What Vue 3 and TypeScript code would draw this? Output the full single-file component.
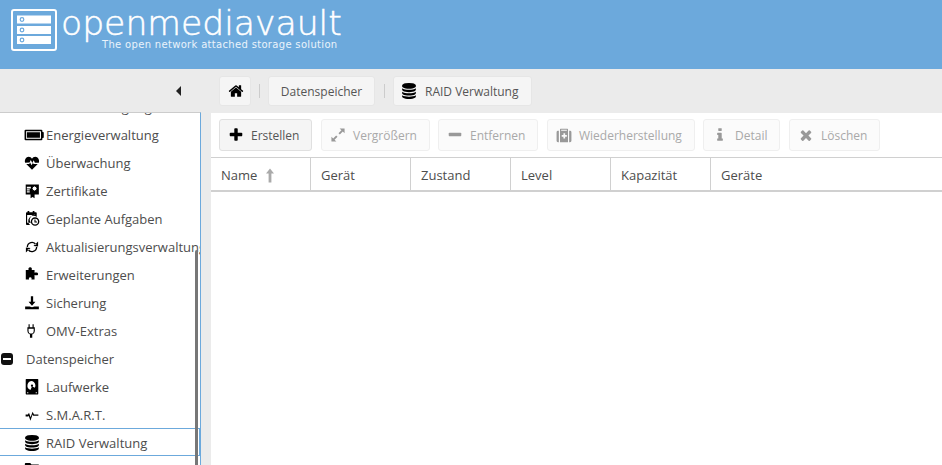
<script setup lang="ts">
const D: Record<string, string> = {
  plus: 'M1600 736v192q0 40-28 68t-68 28h-416v416q0 40-28 68t-68 28h-192q-40 0-68-28t-28-68v-416h-416q-40 0-68-28t-28-68v-192q0-40 28-68t68-28h416v-416q0-40 28-68t68-28h192q40 0 68 28t28 68v416h416q40 0 68 28t28 68z',
  minus: 'M1600 736v192q0 40-28 68t-68 28h-1216q-40 0-68-28t-28-68v-192q0-40 28-68t68-28h1216q40 0 68 28t28 68z',
  times: 'M1490 1322q0 40-28 68l-136 136q-28 28-68 28t-68-28l-294-294-294 294q-28 28-68 28t-68-28l-136-136q-28-28-28-68t28-68l294-294-294-294q-28-28-28-68t28-68l136-136q28-28 68-28t68 28l294 294 294-294q28-28 68-28t68 28l136 136q28 28 28 68t-28 68l-294 294 294 294q28 28 28 68z',
  home: 'M1472 992v480q0 26-19 45t-45 19h-384v-384h-256v384h-384q-26 0-45-19t-19-45v-480q0-1 .5-3t.5-3l575-474 575 474q1 2 1 6zm223-69l-62 74q-8 9-21 11h-3q-13 0-21-7l-692-577-692 577q-12 8-24 7-13-2-21-11l-62-74q-8-10-7-23.5t11-21.5l719-599q32-26 76-26t76 26l244 204v-195q0-14 9-23t23-9h192q14 0 23 9t9 23v408l219 182q10 8 11 21.5t-7 23.5z',
  database: 'M896 768q237 0 443-43t325-127v170q0 69-103 128t-280 93.5-385 34.5-385-34.5-280-93.5-103-128v-170q119 84 325 127t443 43zm0 768q237 0 443-43t325-127v170q0 69-103 128t-280 93.5-385 34.5-385-34.5-280-93.5-103-128v-170q119 84 325 127t443 43zm0-384q237 0 443-43t325-127v170q0 69-103 128t-280 93.5-385 34.5-385-34.5-280-93.5-103-128v-170q119 84 325 127t443 43zm0-1152q208 0 385 34.5t280 93.5 103 128v128q0 69-103 128t-280 93.5-385 34.5-385-34.5-280-93.5-103-128v-128q0-69 103-128t280-93.5 385-34.5z',
  info: 'M1216 1344v128q0 26-19 45t-45 19h-512q-26 0-45-19t-19-45v-128q0-26 19-45t45-19h64v-384h-64q-26 0-45-19t-19-45v-128q0-26 19-45t45-19h384q26 0 45 19t19 45v576h64q26 0 45 19t19 45zm-128-1152v192q0 26-19 45t-45 19h-256q-26 0-45-19t-19-45v-192q0-26 19-45t45-19h256q26 0 45 19t19 45z',
  refresh: 'M300 896A596 596 0 0 1 1400 596L1270 670A446 446 0 0 0 450 896ZM1580 280V840L1060 780ZM1492 896A596 596 0 0 1 392 1196L522 1122A446 446 0 0 0 1342 896ZM212 1512V952L732 1012Z',
  battery: 'M150 420h1400a100 100 0 0 1 100 100v110h60a60 60 0 0 1 60 60v412a60 60 0 0 1-60 60h-60v110a100 100 0 0 1-100 100H150a100 100 0 0 1-100-100V520a100 100 0 0 1 100-100zm30 130v692h1340V550zm70 90h1180v512H250z',
  heart: 'M896 1640 250 1010h340l90-170 170 320 150-290 70 140h470zM130 880C20 540 220 190 530 190c160 0 290 90 366 220 76-130 206-220 366-220 310 0 510 350 400 690h-440l-140-280-150 290-170-320-140 280z',
  cert: 'M192 160h1472v1120h-480v416l-224-128-224 128v-416H192zM320 416h448v192H320zm0 288h320v128H320zm0 224h320v128H320zm860-600-70 110-128-30 30 128-110 70 110 70-30 128 128-30 70 110 70-110 128 30-30-128 110-70-110-70 30-128-128 30z',
  calendar: 'M400 0h192v128h384V0h192v128h160a96 96 0 0 1 96 96v440a540 540 0 0 0-740 900H320a96 96 0 0 1-96-96V224a96 96 0 0 1 96-96h80zM352 448v870h420a540 540 0 0 1 530-870zM1240 704a480 480 0 1 1 0 960 480 480 0 0 1 0-960zm0 150a330 330 0 1 0 0 660 330 330 0 0 0 0-660zm-70 90h120v230h170v120h-290z',
  puzzle: 'M200 340h320c-60-120-20-300 170-300s230 180 170 300h320v300c120-60 400-60 400 130s-280 190-400 130v500H830c40-80 40-240-130-240s-170 160-130 240H200z',
  download: 'M768 128h256v640h256L896 1216 512 768h256zM128 1280h500l268 100 268-100h500v320H128z',
  plug: 'M508 128h128v352h320V128h128v352h128v416a416 416 0 0 1-288 396v372H668v-372a416 416 0 0 1-288-396V480h128zM508 640v256a288 288 0 0 0 576 0V640z',
  hdd: 'M256 0h1280a64 64 0 0 1 64 64v1600a64 64 0 0 1-64 64H256a64 64 0 0 1-64-64V64a64 64 0 0 1 64-64zm640 224a520 520 0 0 0-180 1005l150-300-50-30 70-80 320 170a520 520 0 0 0-310-765zm0 392a128 128 0 1 1 0 256 128 128 0 0 1 0-256zM480 1472h-128v128h128zm960 0h-128v128h128z',
  activity: 'M180 840h260l120-200 180 520 220-640 160 320h490v140H1030l-70-140-240 690-190-550-50 80H180z',
  expand: 'M1080 160h552v552l-200-200-330 330-152-152 330-330zM160 1632v-552l200 200 330-330 152 152-330 330 200 200z',
  medkit: 'M1280 416h288a160 160 0 0 1 160 160v960a160 160 0 0 1-160 160h-96V416zM320 1696h-96a160 160 0 0 1-160-160V576a160 160 0 0 1 160-160h96zm128-1280V256q0-64 64-64h768q64 0 64 64v160h-128V320H576v96h768v1280H448zm384 288v192H640v192h192v192h192v-192h192V896h-192V704z',
  folder: 'M192 0h512l128 160h768a96 96 0 0 1 96 96v800a96 96 0 0 1-96 96H192a96 96 0 0 1-96-96V96a96 96 0 0 1 96-96z',
}

const rows = [
  { icon: 'battery', label: 'Energieverwaltung', wide: true },
  { icon: 'heart', label: 'Überwachung', wide: false },
  { icon: 'cert', label: 'Zertifikate', wide: false },
  { icon: 'calendar', label: 'Geplante Aufgaben', wide: false },
  { icon: 'refresh', label: 'Aktualisierungsverwaltung', wide: false },
  { icon: 'puzzle', label: 'Erweiterungen', wide: false },
  { icon: 'download', label: 'Sicherung', wide: false },
  { icon: 'plug', label: 'OMV-Extras', wide: false },
]
const storage = [
  { icon: 'hdd', label: 'Laufwerke', selected: false },
  { icon: 'activity', label: 'S.M.A.R.T.', selected: false },
  { icon: 'database', label: 'RAID Verwaltung', selected: true },
  { icon: 'folder', label: 'Dateisysteme', selected: false },
]
const buttons = [
  { icon: 'plus', label: 'Erstellen', w: 93, on: true },
  { icon: 'expand', label: 'Vergrößern', w: 109, on: false },
  { icon: 'minus', label: 'Entfernen', w: 100, on: false },
  { icon: 'medkit', label: 'Wiederherstellung', w: 148, on: false },
  { icon: 'info', label: 'Detail', w: 77, on: false },
  { icon: 'times', label: 'Löschen', w: 91, on: false },
]
const columns = ['Name', 'Gerät', 'Zustand', 'Level', 'Kapazität', 'Geräte']
</script>

<template>
  <div class="page">
    <header class="banner">
      <svg class="logo-mark" width="46" height="42" viewBox="0 0 46 42">
        <rect x="1" y="1" width="44" height="40" rx="2" fill="none" stroke="#fff" stroke-width="2" />
        <g v-for="y in [6.5, 17, 27]" :key="y">
          <rect x="6" :y="y" width="34" height="8" fill="#fff" />
          <circle cx="11" :cy="y + 4" r="1.8" fill="none" stroke="#6ca9dc" stroke-width="1.2" />
        </g>
      </svg>
      <div class="brand">
        <div class="brand-name">openmediavault</div>
        <div class="brand-tag">The open network attached storage solution</div>
      </div>
    </header>

    <div class="crumb-row">
      <div class="collapse"><span class="caret"></span></div>
      <div class="crumbs">
        <div class="crumb crumb-home">
          <svg width="16" height="16" viewBox="0 0 1792 1792"><path :d="D.home" /></svg>
        </div>
        <span class="sep"></span>
        <div class="crumb crumb-storage">Datenspeicher</div>
        <span class="sep"></span>
        <div class="crumb crumb-raid">
          <svg width="16" height="16" viewBox="0 0 1792 1792"><path :d="D.database" /></svg>
          <span>RAID Verwaltung</span>
        </div>
      </div>
    </div>

    <div class="main">
      <aside class="side">
        <div class="tree">
          <div class="row child">
            <span class="ic"></span><span class="lbl">Benachrichtigung</span>
          </div>
          <div v-for="r in rows" :key="r.label" class="row child">
            <span class="ic">
              <svg :width="r.wide ? 20 : 16" :height="r.wide ? 20 : 16" viewBox="0 0 1792 1792" class="ic-svg"><path :d="D[r.icon]" fill-rule="evenodd" /></svg>
            </span>
            <span class="lbl">{{ r.label }}</span>
          </div>
          <div class="row group">
            <span class="toggle"><span class="toggle-bar"></span></span>
            <span class="lbl">Datenspeicher</span>
          </div>
          <div v-for="r in storage" :key="r.label" class="row child" :class="{ selected: r.selected }">
            <span class="ic">
              <svg width="16" height="16" viewBox="0 0 1792 1792" class="ic-svg"><path :d="D[r.icon]" fill-rule="evenodd" /></svg>
            </span>
            <span class="lbl">{{ r.label }}</span>
          </div>
        </div>
        <div class="scrollbar"></div>
      </aside>

      <section class="panel">
        <div class="toolbar">
          <div v-for="b in buttons" :key="b.label" class="tbtn" :class="{ off: !b.on }" :style="{ width: b.w + 'px' }">
            <svg width="16" height="16" viewBox="0 0 1792 1792"><path :d="D[b.icon]" fill-rule="evenodd" /></svg>
            <span>{{ b.label }}</span>
          </div>
        </div>
        <div class="thead">
          <div v-for="(c, i) in columns" :key="c" class="th">
            <span>{{ c }}</span>
            <svg v-if="i === 0" class="sort" width="8" height="15" viewBox="0 0 8 15">
              <path d="M4 .5 8 5.5H5.4V14.5H2.6V5.5H0z" />
            </svg>
          </div>
        </div>
      </section>
    </div>
  </div>
</template>

<style>
html, body { margin: 0; height: 100%; overflow: hidden; }
</style>

<style scoped>
.page {
  width: 942px;
  height: 465px;
  display: flex;
  flex-direction: column;
  background: #ebebeb;
  font-family: "Open Sans", sans-serif;
  font-size: 13px;
  color: #4d4d4d;
  overflow: hidden;
}
.banner {
  height: 69px;
  flex: none;
  background: #6ca9dc;
  display: flex;
  align-items: flex-start;
  padding: 9px 0 0 11px;
  box-sizing: border-box;
  color: #fff;
}
.logo-mark { flex: none; }
.brand { margin: -3px 0 0 4px; width: 285px; position: relative; }
.brand-name {
  font-family: "DejaVu Sans", sans-serif;
  font-weight: 200;
  font-size: 34.6px;
  line-height: 34px;
  letter-spacing: 0;
  white-space: nowrap;
  -webkit-text-stroke: 0.5px #fff;
}
.brand-tag {
  position: absolute;
  left: 41px;
  top: 32px;
  font-family: "DejaVu Sans", sans-serif;
  font-size: 10px;
  line-height: 13px;
  letter-spacing: 0.32px;
  white-space: nowrap;
  color: #eaf3fb;
}
.crumb-row {
  height: 43px;
  flex: none;
  display: flex;
  box-sizing: border-box;
  padding-top: 7px;
}
.collapse {
  width: 219px;
  height: 30px;
  flex: none;
  display: flex;
  align-items: center;
  justify-content: flex-end;
  padding-right: 38px;
  box-sizing: border-box;
}
.caret {
  width: 0;
  height: 0;
  border-style: solid;
  border-width: 5.5px 5px 5.5px 0;
  border-color: transparent #222 transparent transparent;
}
.crumbs { display: flex; align-items: flex-start; font-size: 12px; }
.crumb {
  height: 30px;
  box-sizing: border-box;
  background: #f5f5f5;
  border: 1px solid #e6e6e6;
  border-radius: 3px;
  display: flex;
  align-items: center;
  justify-content: center;
  color: #555;
  white-space: nowrap;
}
.crumb-home { width: 32px; padding-left: 2px; }
.crumb-storage { width: 107px; }
.crumb-raid { width: 139px; gap: 8px; justify-content: flex-start; padding-left: 7px; }
.sep {
  width: 1px;
  height: 14px;
  margin: 8px 8px 0 8px;
  background: #ccc;
}
.crumb-storage + .sep { margin: 8px 8px 0 9px; }
.main { flex: 1; display: flex; min-height: 0; }
.side {
  position: relative;
  width: 201px;
  flex: none;
  box-sizing: border-box;
  background: #fff;
  border-top: 1px solid #ccc;
  border-right: 1px solid #6ca9dc;
  overflow: hidden;
}
.tree { margin-top: -20px; }
.row {
  height: 28px;
  box-sizing: border-box;
  display: flex;
  align-items: center;
  white-space: nowrap;
  color: #4d4d4d;
}
.child { padding-left: 24px; }
.ic {
  width: 22px;
  height: 20px;
  flex: none;
  display: flex;
  align-items: center;
}
.group { padding-left: 1px; }
.toggle {
  width: 12px;
  height: 12px;
  background: #111;
  border-radius: 3px;
  flex: none;
  display: flex;
  align-items: center;
  justify-content: center;
  margin-right: 13px;
}
.toggle-bar { width: 8px; height: 2px; background: #fff; }
.selected {
  border-top: 1px solid #6ca9dc;
  border-bottom: 1px solid #6ca9dc;
  border-right: 1px solid #6ca9dc;
  width: 200px;
  height: 28px;
  margin-top: -1px;
  margin-bottom: 1px;
  padding-top: 2px;
}
.scrollbar {
  position: absolute;
  left: 195px;
  top: 137px;
  bottom: 0;
  width: 3px;
  background: #777;
  border-radius: 2px 2px 0 0;
}
.panel {
  margin: 1px 0 0 10px;
  width: 731px;
  background: #fff;
  box-sizing: border-box;
}
.toolbar {
  height: 44px;
  box-sizing: border-box;
  padding: 6px 0 0 8px;
  display: flex;
  gap: 8px;
  background: #fff;
  font-size: 12px;
}
.tbtn {
  height: 32px;
  box-sizing: border-box;
  border: 1px solid #e0e0e0;
  border-radius: 3px;
  background: #f5f5f5;
  display: flex;
  align-items: center;
  padding-left: 8px;
  gap: 7px;
  color: #555;
  white-space: nowrap;
}
.tbtn:nth-child(even) { margin-left: 1px; }
.tbtn.off {
  background: #fbfbfb;
  border-color: #efefef;
  color: #a9a9a9;
}
.tbtn.off svg { fill: #999; }
.thead {
  height: 35px;
  box-sizing: border-box;
  border-top: 1px solid #d0d0d0;
  border-bottom: 2px solid #d0d0d0;
  display: flex;
}
.th {
  width: 100px;
  box-sizing: border-box;
  border-right: 1px solid #d0d0d0;
  padding: 2px 0 0 10px;
  display: flex;
  align-items: center;
  gap: 9px;
  color: #4d4d4d;
}
.th:last-child { flex: 1; border-right: 0; }
.sort { fill: #aaa; }
</style>
